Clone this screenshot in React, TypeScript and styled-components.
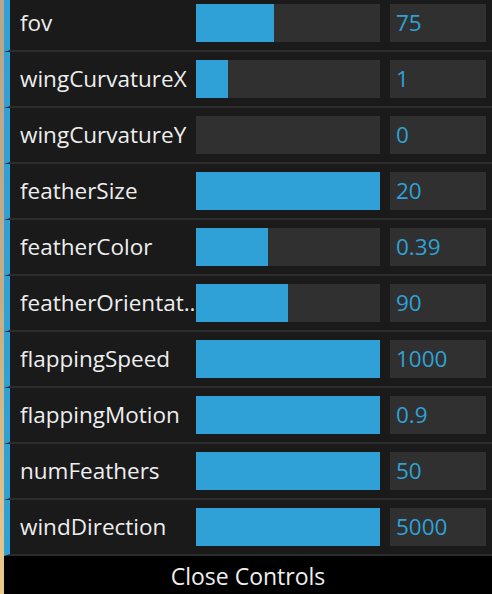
import React from "react";
import styled, { createGlobalStyle } from "styled-components";

const Global = createGlobalStyle`
  html, body {
    margin: 0;
    padding: 0;
    width: 492px;
    height: 594px;
    overflow: hidden;
    background: linear-gradient(180deg, #b8a68a 0%, #c4ad86 50%, #ecc98a 100%);
  }
  * { box-sizing: border-box; }
`;

const Panel = styled.div`
  margin-left: 4px;
  width: 488px;
  height: 594px;
  background: #1a1a1a;
  display: flex;
  flex-direction: column;
  font-family: "Open Sans", "DejaVu Sans", sans-serif;
  font-weight: 500;
  overflow: hidden;
`;

const List = styled.div`
  margin-top: -4px;
  display: flex;
  flex-direction: column;
`;

const Row = styled.div`
  height: 56px;
  border-left: 6px solid #2fa1d6;
  border-bottom: 2px solid #2c2c2c;
  display: grid;
  grid-template-columns: 166px 184px 96px;
  column-gap: 10px;
  align-items: center;
  padding-left: 10px;
`;

const Label = styled.div`
  color: #eee;
  font-size: 22.5px;
  white-space: nowrap;
  line-height: 38px;
`;

const Track = styled.div`
  height: 38px;
  background: #303030;
  display: flex;
`;

const Fill = styled.div`
  height: 100%;
  background: #2fa1d6;
`;

const NumberBox = styled.div`
  height: 38px;
  background: #303030;
  color: #2fa1d6;
  font-size: 22.5px;
  line-height: 38px;
  padding-left: 6px;
`;

const CloseBar = styled.div`
  flex: 1;
  background: #000;
  color: #eee;
  font-size: 23px;
  display: flex;
  align-items: center;
  justify-content: center;
  padding-top: 2px;
`;

const rows: { label: string; fill: number; value: string }[] = [
  { label: "fov", fill: 78, value: "75" },
  { label: "wingCurvatureX", fill: 32, value: "1" },
  { label: "wingCurvatureY", fill: 0, value: "0" },
  { label: "featherSize", fill: 184, value: "20" },
  { label: "featherColor", fill: 72, value: "0.39" },
  { label: "featherOrientat..", fill: 92, value: "90" },
  { label: "flappingSpeed", fill: 184, value: "1000" },
  { label: "flappingMotion", fill: 184, value: "0.9" },
  { label: "numFeathers", fill: 184, value: "50" },
  { label: "windDirection", fill: 184, value: "5000" },
];

export default function App() {
  return (
    <>
      <Global />
      <Panel>
        <List>
          {rows.map((r) => (
            <Row key={r.label}>
              <Label>{r.label}</Label>
              <Track>
                <Fill style={{ width: r.fill }} />
              </Track>
              <NumberBox>{r.value}</NumberBox>
            </Row>
          ))}
        </List>
        <CloseBar>Close Controls</CloseBar>
      </Panel>
    </>
  );
}
